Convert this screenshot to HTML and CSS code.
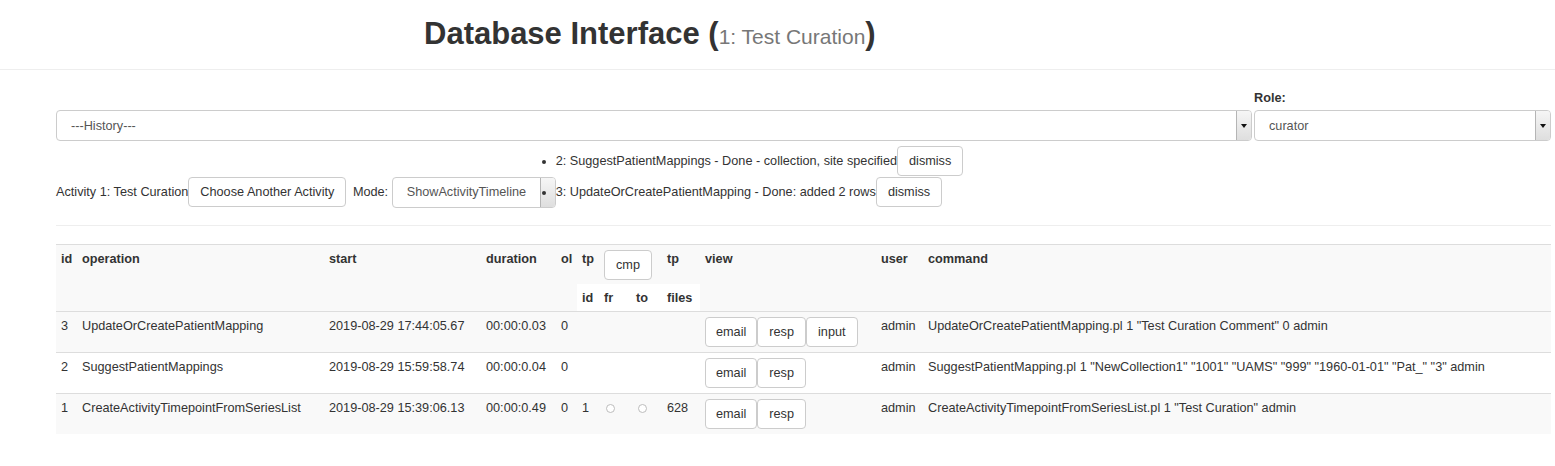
FILE: index.html
```html
<!DOCTYPE html>
<html lang="en">
<head>
<meta charset="utf-8">
<title>Database Interface</title>
<link rel="stylesheet" href="styles.css">
</head>
<body>
<header class="page-header">
  <h1 class="title">Database Interface (<small>1: Test Curation</small>)</h1>
</header>
<main class="content">
  <div class="top-row">
    <div class="field">
      <div class="select-box wide">
        <select><option>---History---</option></select>
        <span class="caret-box"><span class="caret"></span></span>
      </div>
    </div>
    <div class="field">
      <label class="field-label">Role:</label>
      <div class="select-box wide">
        <select><option>curator</option></select>
        <span class="caret-box"><span class="caret"></span></span>
      </div>
    </div>
  </div>

  <div class="activity-line">Activity 1: Test Curation<button class="btn">Choose Another Activity</button> <span class="mode-label">Mode:</span> <div class="select-box mode">
      <select><option>ShowActivityTimeline</option></select>
      <span class="caret-box"></span>
    </div><ul class="messages">
      <li>2: SuggestPatientMappings - Done - collection, site specified<button class="btn">dismiss</button></li>
      <li>3: UpdateOrCreatePatientMapping - Done: added 2 rows<button class="btn">dismiss</button></li>
    </ul></div>

  <hr class="divider">

  <table class="ops">
    <colgroup>
      <col class="c-id"><col class="c-op"><col class="c-start"><col class="c-dur"><col class="c-ol">
      <col class="c-tpid"><col class="c-fr"><col class="c-to"><col class="c-files">
      <col class="c-view"><col class="c-user"><col class="c-cmd">
    </colgroup>
    <tbody>
      <tr class="head">
        <th rowspan="2">id</th>
        <th rowspan="2">operation</th>
        <th rowspan="2">start</th>
        <th rowspan="2">duration</th>
        <th rowspan="2">ol</th>
        <th>tp</th>
        <th colspan="2"><button class="btn">cmp</button></th>
        <th>tp</th>
        <th rowspan="2">view</th>
        <th rowspan="2">user</th>
        <th rowspan="2">command</th>
      </tr>
      <tr class="head sub">
        <th>id</th><th>fr</th><th>to</th><th>files</th>
      </tr>
      <tr class="data">
        <td>3</td>
        <td>UpdateOrCreatePatientMapping</td>
        <td>2019-08-29 17:44:05.67</td>
        <td>00:00:0.03</td>
        <td>0</td>
        <td></td><td></td><td></td><td></td>
        <td><div class="btn-row"><button class="btn">email</button><button class="btn">resp</button><button class="btn">input</button></div></td>
        <td>admin</td>
        <td>UpdateOrCreatePatientMapping.pl 1 "Test Curation Comment" 0 admin</td>
      </tr>
      <tr class="data">
        <td>2</td>
        <td>SuggestPatientMappings</td>
        <td>2019-08-29 15:59:58.74</td>
        <td>00:00:0.04</td>
        <td>0</td>
        <td></td><td></td><td></td><td></td>
        <td><div class="btn-row"><button class="btn">email</button><button class="btn">resp</button></div></td>
        <td>admin</td>
        <td>SuggestPatientMapping.pl 1 "NewCollection1" "1001" "UAMS" "999" "1960-01-01" "Pat_" "3" admin</td>
      </tr>
      <tr class="data">
        <td>1</td>
        <td>CreateActivityTimepointFromSeriesList</td>
        <td>2019-08-29 15:39:06.13</td>
        <td>00:00:0.49</td>
        <td>0</td>
        <td>1</td>
        <td><span class="radio"></span></td>
        <td><span class="radio"></span></td>
        <td>628</td>
        <td><div class="btn-row"><button class="btn">email</button><button class="btn">resp</button></div></td>
        <td>admin</td>
        <td>CreateActivityTimepointFromSeriesList.pl 1 "Test Curation" admin</td>
      </tr>
    </tbody>
  </table>
</main>
</body>
</html>
```

FILE: styles.css
```css
* { box-sizing: border-box; }

html, body {
  margin: 0;
  padding: 0;
  background: #fff;
}

body {
  font-family: "Liberation Sans", Arial, Helvetica, sans-serif;
  font-size: 12.7px;
  line-height: 18px;
  color: #333;
}

.page-header {
  padding: 17px 0 18px 424px;
  border-bottom: 1px solid #eee;
}

.title {
  margin: 0;
  height: 34px;
  font-size: 31px;
  line-height: 34px;
  font-weight: bold;
  color: #333;
}

.title small {
  font-size: 21px;
  line-height: 1;
  font-weight: normal;
  color: #777;
}

.content {
  padding: 19px 4px 30px 56px;
}

.top-row {
  display: grid;
  grid-template-columns: 1fr 297px;
  column-gap: 2px;
  align-items: end;
}

.field {
  display: flex;
  flex-direction: column;
}

.field-label {
  font-weight: bold;
  margin-bottom: 3px;
}

.select-box {
  display: inline-flex;
  height: 31px;
  border: 1px solid #ccc;
  border-radius: 4px;
  background: #fff;
  overflow: hidden;
  vertical-align: baseline;
}

.select-box.wide {
  display: flex;
}

.select-box.mode {
  width: 164px;
}

.select-box select {
  flex: 1;
  min-width: 0;
  appearance: none;
  -webkit-appearance: none;
  border: 0;
  background: transparent;
  font-family: inherit;
  font-size: 12.7px;
  color: #555;
  padding: 0 0 0 14px;
  margin: 0;
  outline: none;
}

.caret-box {
  flex: 0 0 15px;
  display: flex;
  align-items: center;
  justify-content: center;
  border-left: 1px solid #b5b5b5;
  background: linear-gradient(#f6f6f6, #dedede);
}

.caret {
  width: 0;
  height: 0;
  border-left: 3px solid transparent;
  border-right: 3px solid transparent;
  border-top: 4px solid #111;
}

.btn {
  display: inline-block;
  font-family: inherit;
  font-size: 12.7px;
  line-height: 16px;
  color: #333;
  background: #fff;
  border: 1px solid #ccc;
  border-radius: 4px;
  padding: 6px 11px;
  margin: 0;
  vertical-align: middle;
  cursor: pointer;
}

.activity-line {
  margin-top: 5px;
}

.activity-line > .btn {
  vertical-align: baseline;
}

.mode-label {
  margin-left: 3px;
}

.messages {
  display: inline-block;
  vertical-align: baseline;
  margin: 0;
  padding: 0;
  list-style: disc outside;
}

.messages li {
  line-height: 31px;
}

.messages .btn {
  vertical-align: baseline;
}

.divider {
  border: 0;
  border-top: 1px solid #eee;
  margin: 17px 0 18px;
}

.ops {
  width: 100%;
  table-layout: fixed;
  border-collapse: collapse;
  border-spacing: 0;
  border-top: 1px solid #ddd;
}

.c-id { width: 21px; }
.c-op { width: 247px; }
.c-start { width: 157px; }
.c-dur { width: 75px; }
.c-ol { width: 21px; }
.c-tpid { width: 22px; }
.c-fr { width: 32px; }
.c-to { width: 31px; }
.c-files { width: 38px; }
.c-view { width: 176px; }
.c-user { width: 47px; }

.ops th,
.ops td {
  padding: 5px;
  text-align: left;
  vertical-align: top;
  white-space: nowrap;
}

.ops th {
  font-weight: bold;
}

.ops tr.head > th {
  padding-bottom: 4px;
}

.ops tr.data td {
  border-top: 1px solid #ddd;
}

.ops tr:nth-child(odd) > th,
.ops tr:nth-child(odd) > td {
  background: #f9f9f9;
}

.ops tr.head .btn {
  vertical-align: top;
}

.btn-row {
  display: flex;
}

.btn-row .btn:first-child {
  padding: 6px 10px;
}

.radio {
  display: inline-block;
  width: 9px;
  height: 9px;
  margin-left: 2px;
  border: 1px solid #bdbdbd;
  border-radius: 50%;
  background: #fff;
  vertical-align: -1px;
}
```
